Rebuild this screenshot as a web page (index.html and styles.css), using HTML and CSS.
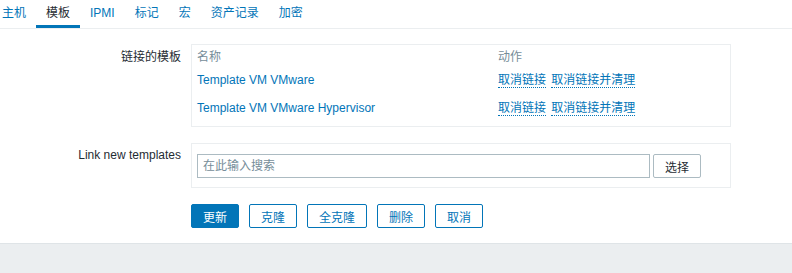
FILE: index.html
```html
<!DOCTYPE html>
<html lang="zh">
<head>
<meta charset="utf-8">
<link rel="stylesheet" href="styles.css">
</head>
<body>
<div class="page">
  <ul class="tabs">
    <li class="tab">主机</li>
    <li class="tab active">模板</li>
    <li class="tab">IPMI</li>
    <li class="tab">标记</li>
    <li class="tab">宏</li>
    <li class="tab">资产记录</li>
    <li class="tab">加密</li>
  </ul>
  <div class="form">
    <div class="label label-top">链接的模板</div>
    <div class="box box-table">
      <table class="tpl">
        <thead>
          <tr><th class="col-name">名称</th><th>动作</th></tr>
        </thead>
        <tbody>
          <tr class="first"><td><a class="link">Template VM VMware</a></td><td><a class="dlink">取消链接</a> <a class="dlink">取消链接并清理</a></td></tr>
          <tr><td><a class="link">Template VM VMware Hypervisor</a></td><td><a class="dlink">取消链接</a> <a class="dlink">取消链接并清理</a></td></tr>
        </tbody>
      </table>
    </div>
    <div class="label label-top2">Link new templates</div>
    <div class="box box-search">
      <div class="input">在此输入搜索</div>
      <button class="btn-grey">选择</button>
    </div>
    <div></div>
    <div class="actions">
      <button class="btn primary">更新</button>
      <button class="btn">克隆</button>
      <button class="btn">全克隆</button>
      <button class="btn">删除</button>
      <button class="btn">取消</button>
    </div>
  </div>
  <div class="footer"></div>
</div>
</body>
</html>
```
FILE: styles.css
```css
* { box-sizing: border-box; }
html, body { margin: 0; padding: 0; background: #fff; }
body {
  font-family: "Liberation Sans", Arial, "Noto Sans CJK SC", sans-serif;
  font-size: 12px;
  color: #1f2c33;
  width: 792px;
  height: 273px;
  overflow: hidden;
}
.page { display: flex; flex-direction: column; height: 273px; }
.tabs {
  list-style: none;
  margin: 0;
  padding: 0;
  display: flex;
  height: 29px;
  border-bottom: 1px solid #ebeef0;
  margin-left: -8px;
}
.tab {
  padding: 0 10px;
  height: 28px;
  line-height: 26px;
  color: #0275b8;
  border-bottom: 3px solid transparent;
}
.tab.active {
  color: #1f2c33;
  border-bottom-color: #0275b8;
}
.form {
  display: grid;
  grid-template-columns: 181px 540px;
  column-gap: 10px;
  row-gap: 16px;
  padding-top: 15px;
}
.label {
  text-align: right;
  line-height: 16px;
}
.label-top { padding-top: 5px; }
.label-top2 { padding-top: 4px; }
.box {
  border: 1px solid #ebeef0;
}
.box-table { padding: 4px 5px 4px 5px; }
.tpl { border-collapse: collapse; width: 100%; }
.tpl th {
  font-weight: normal;
  color: #768d99;
  text-align: left;
  padding: 0;
  height: 16px;
  line-height: 16px;
}
.tpl .col-name { width: 301px; }
.tpl td {
  padding: 0;
  height: 28px;
  line-height: 16px;
  vertical-align: middle;
}
.tpl tr.first td { height: 29px; padding-top: 1px; }
.link { color: #0275b8; }
.dlink {
  color: #0275b8;
  border-bottom: 1px dotted #0275b8;
  margin-right: 2px;
}
.box-search {
  padding: 10px 5px 9px 5px;
  display: flex;
  gap: 3px;
}
.input {
  width: 453px;
  height: 24px;
  border: 1px solid #acbbc2;
  color: #768d99;
  padding: 0 5px;
  line-height: 22px;
}
.btn-grey {
  width: 48px;
  height: 24px;
  border: 1px solid #acbbc2;
  border-radius: 2px;
  background: #fff;
  color: #1f2c33;
  font: inherit;
  padding: 0;
}
.actions { display: flex; gap: 10px; }
.btn {
  height: 24px;
  min-width: 48px;
  padding: 0 11px;
  border: 1px solid #0275b8;
  border-radius: 2px;
  background: #fff;
  color: #0275b8;
  font: inherit;
}
.btn.primary { background: #0275b8; color: #fff; }
.footer {
  margin-top: 15px;
  flex: 1;
  background: #ebeef0;
  border-top: 1px solid #dfe4e7;
}
```
